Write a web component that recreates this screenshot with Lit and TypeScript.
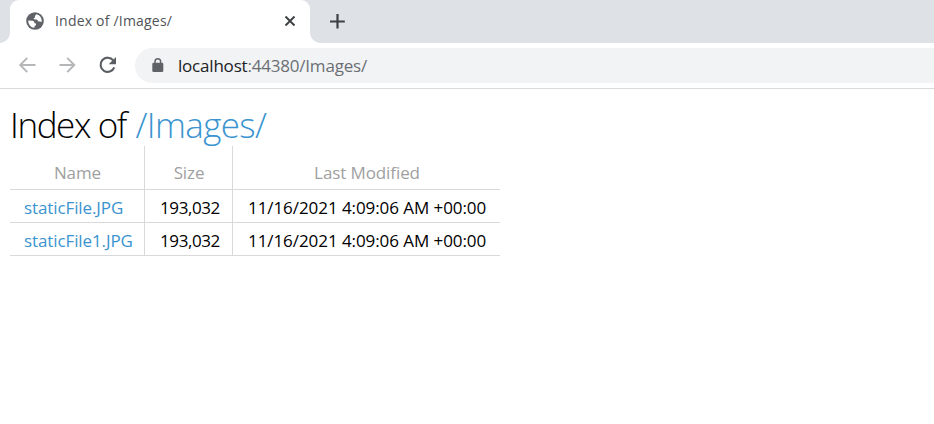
import { LitElement, html, css } from "lit";
import { customElement, property } from "lit/decorators.js";

interface FileEntry {
  name: string;
  size: string;
  modified: string;
}

@customElement("browser-tabs")
class BrowserTabs extends LitElement {
  @property() label = "";

  static styles = css`
    :host {
      display: flex;
      height: 43px;
      padding-left: 10px;
      background: #dee1e6;
      align-items: stretch;
      font-family: "Open Sans", "Noto Sans", sans-serif;
    }
    .tab {
      position: relative;
      box-sizing: border-box;
      width: 300px;
      display: flex;
      align-items: center;
      padding: 0 12px 1px 16px;
      background: #fff;
      border-radius: 9px 9px 0 0;
    }
    .tab::before,
    .tab::after {
      content: "";
      position: absolute;
      bottom: 0;
      width: 10px;
      height: 10px;
    }
    .tab::before {
      left: -10px;
      background: radial-gradient(circle at 0 0, transparent 9.5px, #fff 10px);
    }
    .tab::after {
      right: -10px;
      background: radial-gradient(circle at 100% 0, transparent 9.5px, #fff 10px);
    }
    .globe {
      width: 18px;
      height: 18px;
      margin-right: 11px;
    }
    .label {
      flex: 1;
      font-size: 14px;
      letter-spacing: 0.2px;
      color: #505458;
      white-space: nowrap;
      margin-top: -1px;
    }
    .close {
      width: 16px;
      height: 16px;
    }
    .new {
      width: 16px;
      height: 16px;
      margin: 13px 0 0 19px;
    }
  `;

  render() {
    return html`
      <div class="tab">
        <svg class="globe" viewBox="0 0 18 18">
          <circle cx="9" cy="9" r="8.8" fill="#5f6368" />
          <path
            d="M2.2 8.6 L6.1 8.8 C8 9 8.5 9.8 8.4 11.2 L10.1 11.4 L10 13.3 L8.7 13.7 L8.4 15.8 A6.8 6.8 0 0 1 2.2 8.6 Z"
            fill="#fff"
          />
          <path
            d="M10.6 2.3 C9.6 3.1 8.8 3.9 8.9 5.1 C9 6.1 8.2 6.2 7.6 6.6 C8 7.7 9 7.6 10.4 7.5 C11.7 7.5 11.7 8.7 11.9 9.3 C13 9.6 14.4 9.5 15.7 9.9 A6.8 6.8 0 0 0 10.6 2.3 Z"
            fill="#fff"
          />
        </svg>
        <span class="label">${this.label}</span>
        <svg class="close" viewBox="0 0 16 16">
          <path d="M3.5 3.5 L12.5 12.5 M12.5 3.5 L3.5 12.5" stroke="#3c4043" stroke-width="1.9" />
        </svg>
      </div>
      <svg class="new" viewBox="0 0 16 16">
        <path d="M8.5 1 V15.5 M1 8.5 H15.8" stroke="#3c4043" stroke-width="2.2" />
      </svg>
    `;
  }
}

@customElement("browser-toolbar")
class BrowserToolbar extends LitElement {
  @property() host = "";
  @property() path = "";

  static styles = css`
    :host {
      box-sizing: border-box;
      display: flex;
      align-items: center;
      height: 46px;
      padding: 0 0 1px 17px;
      background: #fff;
      border-bottom: 1px solid #d9dadc;
      font-family: "Open Sans", "Noto Sans", sans-serif;
    }
    .nav {
      display: flex;
      gap: 20px;
      width: 118px;
    }
    .nav svg {
      width: 20px;
      height: 20px;
    }
    .address {
      flex: 1;
      display: flex;
      align-items: center;
      height: 35px;
      padding-left: 17px;
      background: #f1f3f4;
      border-radius: 18px 0 0 18px;
    }
    .lock {
      width: 12px;
      height: 16px;
      margin-right: 14px;
    }
    .url {
      font-size: 17px;
      letter-spacing: -0.2px;
      color: #6b6f74;
      white-space: nowrap;
    }
    .host {
      color: #202124;
    }
  `;

  render() {
    return html`
      <div class="nav">
        <svg viewBox="0 0 20 20" fill="none" stroke="#b4b6b8" stroke-width="1.9">
          <path d="M18.5 10 H3.5 M10.3 2.9 L3.2 10 L10.3 17.1" />
        </svg>
        <svg viewBox="0 0 20 20" fill="none" stroke="#b4b6b8" stroke-width="1.9">
          <path d="M2.5 10 H17 M10.2 2.9 L17.3 10 L10.2 17.1" />
        </svg>
        <svg viewBox="0 0 20 20" fill="none" stroke="#5a5e62" stroke-width="2.1">
          <path d="M16.3 5.4 A7.1 7.1 0 1 0 17.3 12.4" />
          <path d="M19 2 V9.3 H11.7 Z" fill="#5a5e62" stroke="none" />
        </svg>
      </div>
      <div class="address">
        <svg class="lock" viewBox="0 0 12 16">
          <path d="M3 7 V4.6 A2.8 2.8 0 0 1 8.6 4.6 V7" fill="none" stroke="#5f6368" stroke-width="1.5" />
          <rect x="0.3" y="5.8" width="11" height="9.2" rx="1.2" fill="#5f6368" />
        </svg>
        <span class="url"><span class="host">${this.host}</span>${this.path}</span>
      </div>
    `;
  }
}

@customElement("directory-listing")
class DirectoryListing extends LitElement {
  @property() path = "";
  @property({ attribute: false }) files: FileEntry[] = [];

  static styles = css`
    :host {
      display: block;
      padding: 13px 0 0 10px;
      font-family: "Open Sans", "Noto Sans", sans-serif;
      color: #000;
    }
    h1 {
      margin: 0;
      height: 44px;
      line-height: 45px;
      font-size: 35px;
      font-weight: 300;
      letter-spacing: -1.4px;
      white-space: nowrap;
    }
    a {
      color: #3b94d0;
      text-decoration: none;
    }
    h1 a {
      letter-spacing: -0.65px;
      margin-left: 2px;
    }
    .table {
      display: grid;
      grid-template-columns: 135px 88px 267px;
      width: 490px;
      font-size: 17px;
      letter-spacing: -0.1px;
    }
    .cell {
      box-sizing: border-box;
      height: 33px;
      padding: 2px 0 0 14px;
      line-height: 32px;
      border-bottom: 1px solid #d9d9d9;
      border-right: 1px solid #d9d9d9;
      white-space: nowrap;
    }
    .cell:nth-child(3n) {
      border-right: 0;
    }
    .cell.size {
      padding-left: 15px;
      letter-spacing: -0.4px;
    }
    .cell.date {
      padding-left: 15px;
      letter-spacing: -0.07px;
    }
    .cell.head {
      height: 44px;
      padding: 11px 0 0 1px;
      text-align: center;
      color: #a0a0a0;
    }
  `;

  render() {
    return html`
      <h1>Index of <a>${this.path}</a></h1>
      <div class="table">
        <div class="cell head">Name</div>
        <div class="cell head">Size</div>
        <div class="cell head">Last Modified</div>
        ${this.files.map(
          (f) => html`
            <div class="cell"><a>${f.name}</a></div>
            <div class="cell size">${f.size}</div>
            <div class="cell date">${f.modified}</div>
          `
        )}
      </div>
    `;
  }
}

@customElement("app-root")
class AppRoot extends LitElement {
  static styles = css`
    :host {
      display: block;
      height: 424px;
      overflow: hidden;
      background: #fff;
    }
  `;

  private files: FileEntry[] = [
    { name: "staticFile.JPG", size: "193,032", modified: "11/16/2021 4:09:06 AM +00:00" },
    { name: "staticFile1.JPG", size: "193,032", modified: "11/16/2021 4:09:06 AM +00:00" },
  ];

  render() {
    return html`
      <browser-tabs label="Index of /Images/"></browser-tabs>
      <browser-toolbar host="localhost" path=":44380/Images/"></browser-toolbar>
      <directory-listing path="/Images/" .files=${this.files}></directory-listing>
    `;
  }
}
